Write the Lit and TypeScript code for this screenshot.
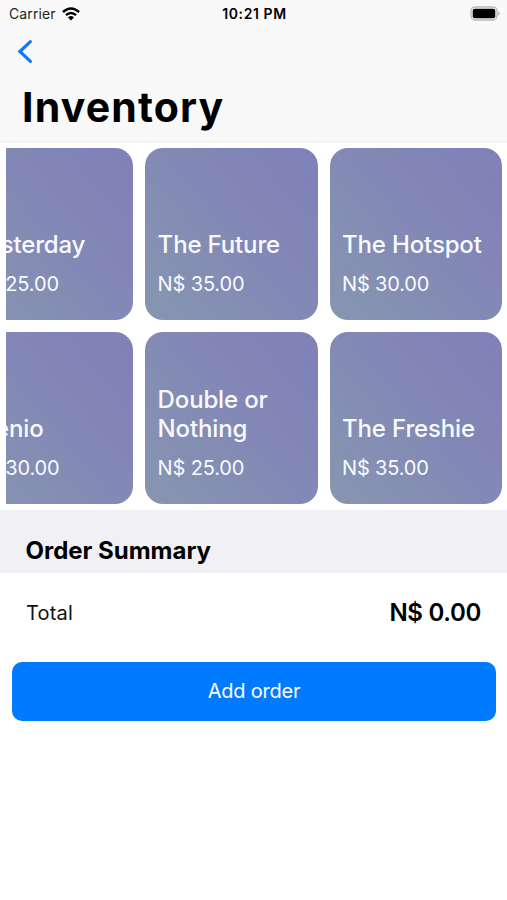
import { LitElement, html, css } from "lit";
import { customElement } from "lit/decorators.js";

interface Item { name: string; price: string }

const ROWS: Item[][] = [
  [
    { name: "Yesterday", price: "N$ 25.00" },
    { name: "The Future", price: "N$ 35.00" },
    { name: "The Hotspot", price: "N$ 30.00" },
  ],
  [
    { name: "Trenio", price: "N$ 30.00" },
    { name: "Double or Nothing", price: "N$ 25.00" },
    { name: "The Freshie", price: "N$ 35.00" },
  ],
];

@customElement("app-root")
export class AppRoot extends LitElement {
  static styles = css`
    :host { display: block; height: 900px; background: #fff; color: #000; font-family: Inter, "Liberation Sans", sans-serif; overflow: hidden; }
    * { box-sizing: border-box; }
    .head { height: 143px; background: #f9f9f9; border-bottom: 2px solid #f3f3f4; }
    .status { height: 27px; display: grid; grid-template-columns: 1fr auto 1fr; align-items: center; padding: 0 7px 0 9px; font-size: 14px; }
    .carrier { display: flex; align-items: center; gap: 6px; color: #222; letter-spacing: 0.1px; }
    .time { font-weight: 600; font-size: 14px; letter-spacing: 0.6px; }
    .battery { justify-self: end; display: block; }
    .back { display: block; margin: 12px 0 0 17px; }
    h1 { margin: 18px 0 0 22px; font-size: 41px; line-height: 50px; font-weight: 700; letter-spacing: 1.15px; }
    .grid { height: 367px; padding: 5px 5px 6px 6px; display: flex; flex-direction: column; gap: 12px; }
    .row { display: flex; justify-content: flex-end; gap: 12px; overflow: hidden; height: 172px; }
    .card { flex: 0 0 172.4px; height: 172px; border-radius: 18px; padding: 0 12px 24px 12.4px; background: linear-gradient(50deg, #8796b0, #8389b5 50%, #7f80b8); color: #f8faff; display: flex; flex-direction: column; justify-content: flex-end; }
    .card:first-child { padding-left: 11.4px; }
    .name { font-size: 24px; line-height: 29px; font-weight: 500; letter-spacing: -0.15px; }
    .price { font-size: 20px; line-height: 24px; margin-top: 13px; letter-spacing: -0.15px; }
    .section { height: 63px; padding: 27px 26px 0 25.5px; background: #f0f0f5; font-size: 24px; line-height: 28px; font-weight: 700; letter-spacing: 0; }
    .total { height: 78px; padding: 0 26px; display: flex; align-items: center; justify-content: space-between; font-size: 20px; color: #111; }
    .label { letter-spacing: 0.2px; padding-top: 1px; }
    .amount { font-size: 24px; font-weight: 600; color: #000; letter-spacing: -0.3px; }
    .add { display: block; width: 484px; height: 59px; margin: 11px 0 0 12px; padding: 0 0 1px; border: 0; border-radius: 10px; background: #007aff; color: #fff; font: 400 20px Inter, sans-serif; letter-spacing: -0.2px; }
  `;

  render() {
    return html`
      <div class="head">
        <div class="status">
          <div class="carrier"><span>Carrier</span>
            <svg width="18" height="14" viewBox="0 0 18 14"><g fill="none" stroke="#000" stroke-width="2.4"><path d="M.9 5Q9-2.2 17.1 5M3.9 8.2Q9 3.8 14.1 8.2"/></g><path d="M6 10.4Q9 7.8 12 10.4L9 13.6Z"/></svg>
          </div>
          <div class="time">10:21 PM</div>
          <svg class="battery" width="30" height="15" viewBox="0 0 30 15"><rect x="1" y="1" width="26" height="13" rx="4" fill="none" stroke="#b9b9b9" stroke-width="1.4"/><rect x="2.7" y="2.7" width="22.6" height="9.6" rx="2"/><path d="M28.4 5.2Q31 7.5 28.4 9.8Z" fill="#aaa"/></svg>
        </div>
        <svg class="back" width="16" height="25" viewBox="0 0 16 25"><path d="M13.4 2.6 2.9 12.5 13.4 22.4" fill="none" stroke="#0a7aff" stroke-width="3.2" stroke-linecap="round" stroke-linejoin="miter"/></svg>
        <h1>Inventory</h1>
      </div>
      <div class="grid">
        ${ROWS.map((r) => html`<div class="row">${r.map((i) => html`<div class="card"><div class="name">${i.name}</div><div class="price">${i.price}</div></div>`)}</div>`)}
      </div>
      <div class="section">Order Summary</div>
      <div class="total"><span class="label">Total</span><span class="amount">N$ 0.00</span></div>
      <button class="add">Add order</button>
    `;
  }
}
